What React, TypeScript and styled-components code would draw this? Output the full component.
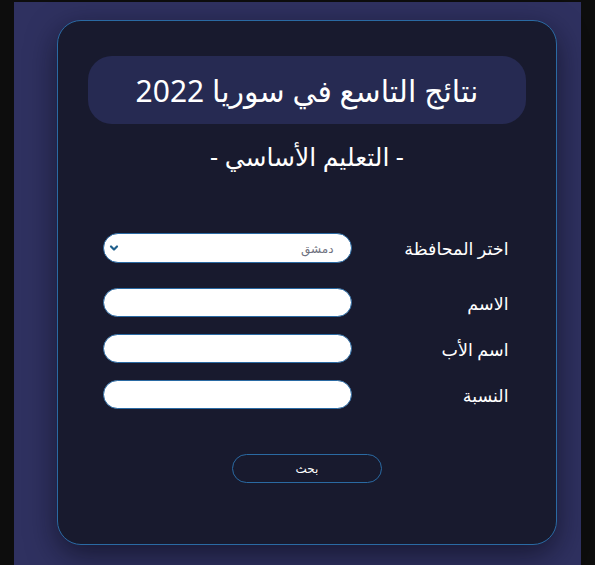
import { FC } from 'react'
import styled, { createGlobalStyle } from 'styled-components'

const GlobalStyle = createGlobalStyle`
  html, body {
    margin: 0;
    padding: 0;
    background: #0d0d0d;
    font-family: "Noto Sans", "DejaVu Sans", sans-serif;
  }
  * { box-sizing: border-box; }
`

const Page = styled.div(() => `
  margin: 2px 14px 0 14px;
  height: 563px;
  background: #2f3160;
  padding: 18px 25px 0 43px;
`)

const Card = styled.div(() => `
  direction: rtl;
  width: 500px;
  height: 525px;
  background: #181a2e;
  border: 1px solid #2a6aa3;
  border-radius: 24px;
  box-shadow: 0 10px 30px rgba(8, 8, 20, 0.6);
  padding: 35px 30px 0 30px;
  display: flex;
  flex-direction: column;
  align-items: center;
`)

const TitleBox = styled.div(() => `
  width: 100%;
  height: 68px;
  background: #262a52;
  border-radius: 24px;
  display: flex;
  align-items: center;
  justify-content: center;
  color: #ffffff;
  font-size: 30px;
`)

const SubTitle = styled.div(() => `
  color: #ffffff;
  font-size: 25px;
  margin-top: 12px;
  height: 40px;
  line-height: 40px;
`)

const Form = styled.div(() => `
  width: 406px;
  margin: 57px 3px 0 0;
  display: flex;
  flex-direction: column;
  gap: 17px;
`)

const Row = styled.div<{ $extra?: number }>((props) => `
  display: flex;
  align-items: center;
  justify-content: space-between;
  margin-bottom: ${props.$extra ?? 0}px;
`)

const Label = styled.label(() => `
  color: #ffffff;
  font-size: 17.5px;
`)

const Field = styled.input(() => `
  width: 249px;
  height: 29px;
  border: 1px solid #2a6aa3;
  border-radius: 15px;
  background: #ffffff;
  outline: none;
  padding: 0 16px;
  font-family: inherit;
`)

const SelectBox = styled.div(() => `
  width: 249px;
  height: 30px;
  border: 1px solid #2a6aa3;
  border-radius: 15px;
  background: #ffffff;
  display: flex;
  align-items: center;
  justify-content: space-between;
  padding: 0 17px 0 4px;
  color: #6f7280;
  font-size: 12px;
`)

const Chevron = styled.svg(() => `
  width: 12px;
  height: 12px;
`)

const Button = styled.button(() => `
  margin-top: 45px;
  width: 150px;
  height: 29px;
  border: 1px solid #2a6aa3;
  border-radius: 15px;
  background: transparent;
  color: #ffffff;
  font-family: inherit;
  font-size: 12px;
`)

const App: FC = () => {
  return (
    <>
      <GlobalStyle />
      <Page>
        <Card>
          <TitleBox>نتائج التاسع في سوريا 2022</TitleBox>
          <SubTitle>- التعليم الأساسي -</SubTitle>
          <Form>
            <Row $extra={8}>
              <Label>اختر المحافظة</Label>
              <SelectBox>
                <span>دمشق</span>
                <Chevron viewBox="0 0 12 12">
                  <path d="M3 4.5 L6 7.5 L9 4.5" fill="none" stroke="#1f5f8c" strokeWidth="2.2" strokeLinecap="round" strokeLinejoin="round" />
                </Chevron>
              </SelectBox>
            </Row>
            <Row>
              <Label>الاسم</Label>
              <Field />
            </Row>
            <Row>
              <Label>اسم الأب</Label>
              <Field />
            </Row>
            <Row>
              <Label>النسبة</Label>
              <Field />
            </Row>
          </Form>
          <Button>بحث</Button>
        </Card>
      </Page>
    </>
  )
}

export default App
